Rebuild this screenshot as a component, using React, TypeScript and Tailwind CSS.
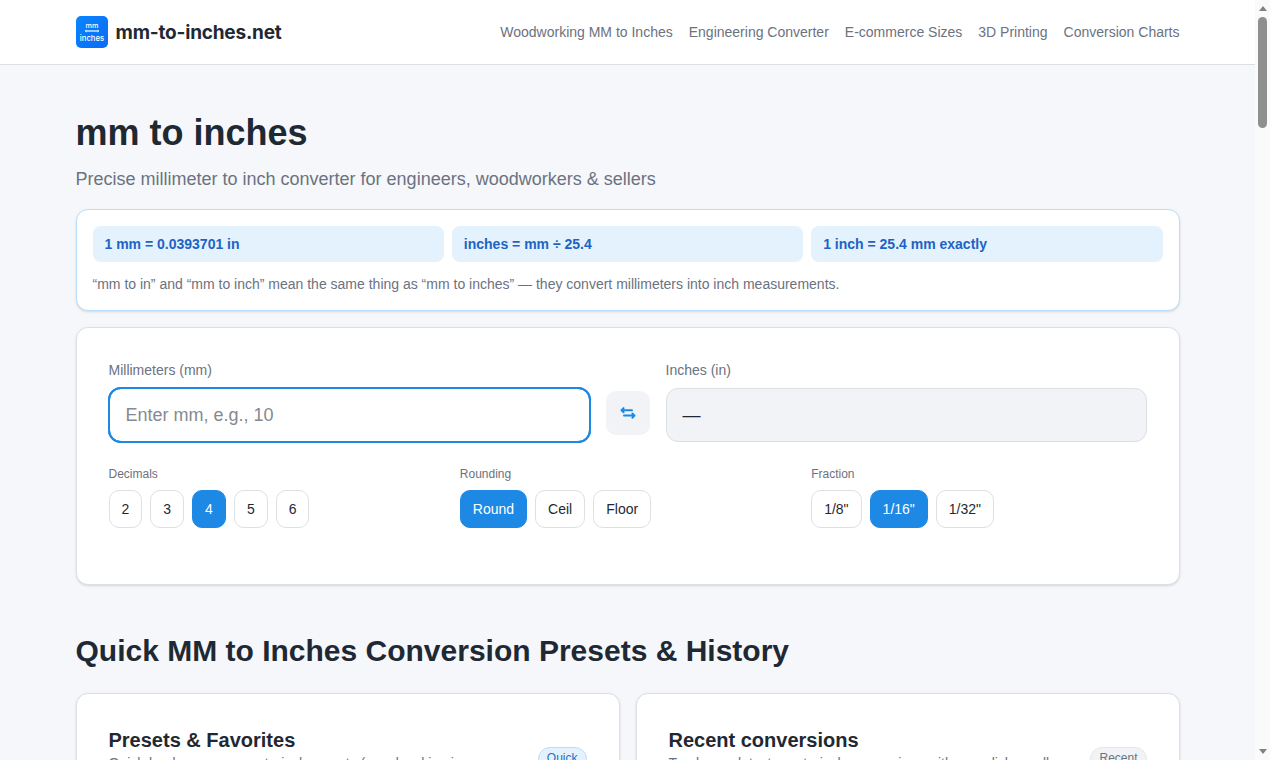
const sans = "font-['Liberation_Sans',Arial,sans-serif]";
const nav = ["Woodworking MM to Inches", "Engineering Converter", "E-commerce Sizes", "3D Printing", "Conversion Charts"];
const facts = ["1 mm = 0.0393701 in", "inches = mm ÷ 25.4", "1 inch = 25.4 mm exactly"];

function Logo() {
  return (
    <svg width="32" height="32" viewBox="0 0 32 32" className="shrink-0">
      <defs>
        <linearGradient id="logo-bg" x1="0" y1="0" x2="1" y2="1">
          <stop offset="0" stopColor="#0a84ff" />
          <stop offset="1" stopColor="#0a6cf5" />
        </linearGradient>
      </defs>
      <rect width="32" height="32" rx="5" fill="url(#logo-bg)" />
      <text x="16" y="11.5" textAnchor="middle" fontSize="7.2" fontWeight="500" fill="#fff" fontFamily="Inter, sans-serif">mm</text>
      <path d="M9.5 15h13" stroke="#fff" strokeWidth="1.2" />
      <path d="M10.5 14l-1.5 1 1.5 1M21.5 14l1.5 1-1.5 1" stroke="#fff" strokeWidth="0.7" fill="none" />
      <text x="16" y="25" textAnchor="middle" fontSize="7.7" fontWeight="500" fill="#fff" fontFamily="Inter, sans-serif">inches</text>
    </svg>
  );
}

function SwapIcon() {
  return (
    <svg width="16" height="16" viewBox="0 0 16 16" fill="none" stroke="#1e88e5" strokeWidth="2" strokeLinecap="round" strokeLinejoin="round">
      <path d="M1.5 5.2h10.5M3.6 3.1 1.5 5.2l2.1 2.1" />
      <path d="M14.5 10.6H4M12.4 8.5l2.1 2.1-2.1 2.1" />
    </svg>
  );
}

function Pills({ label, items, active }: { label: string; items: string[]; active: string }) {
  return (
    <div>
      <div className="text-xs leading-[14px] text-[#6b7280] mb-[9px]">{label}</div>
      <div className="flex gap-2">
        {items.map((item) => (
          <button
            key={item}
            className={
              item === active
                ? "h-[38px] px-3 rounded-[10px] border border-[#1e88e5] bg-[#1e88e5] text-white text-sm"
                : "h-[38px] px-3 rounded-[10px] border border-[#dcdfe4] bg-white text-[#1f2933] text-sm"
            }
          >
            {item}
          </button>
        ))}
      </div>
    </div>
  );
}

function Card({ title, text, badge, quick }: { title: string; text: string; badge: string; quick?: boolean }) {
  return (
    <section className="bg-white border border-[#dcdfe4] rounded-xl p-8 h-[400px] shadow-sm">
      <div className="flex items-start justify-between gap-4">
        <div>
          <h3 className="text-xl leading-7 font-bold">{title}</h3>
          <p className="-mt-px text-sm text-[#6b7280] leading-5">{text}</p>
        </div>
        <span
          className={
            quick
              ? "mt-[21px] px-2 h-6 rounded-full border border-[#bbdefb] bg-[#e3f2fd] text-xs leading-5 text-[#1e6fc4]"
              : "mt-[21px] px-2 h-6 rounded-full border border-[#e5e7eb] bg-[#f1f3f6] text-xs leading-5 text-[#6b7280]"
          }
        >
          {badge}
        </span>
      </div>
    </section>
  );
}

export default function App() {
  return (
    <div className={`h-screen flex overflow-hidden bg-[#f5f7fb] text-[#1f2933] ${sans}`}>
      <div className="flex-1 min-w-0">
        <header className="bg-white border-b border-[#dcdfe4] h-[65px]">
          <div className="w-[1104px] mx-auto h-full flex items-center justify-between">
            <div className="flex items-center gap-2">
              <Logo />
              <span className="mt-0.5 font-['Inter',sans-serif] text-[19px] tracking-[-0.2px] font-bold text-[#1f2933]">mm-to-inches.net</span>
            </div>
            <nav className="flex gap-4 text-sm text-[#6b7280]">
              {nav.map((n) => (
                <a key={n}>{n}</a>
              ))}
            </nav>
          </div>
        </header>

        <main className="w-[1104px] mx-auto pt-12">
          <h1 className="text-[36px] leading-10 font-bold">mm to inches</h1>
          <p className="mt-[15px] text-lg leading-[22px] text-[#6b7280]">
            Precise millimeter to inch converter for engineers, woodworkers &amp; sellers
          </p>

          <section className="mt-[19px] bg-white border border-[#bbdefb] rounded-xl p-4 shadow-sm">
            <div className="grid grid-cols-3 gap-2">
              {facts.map((f) => (
                <div key={f} className="h-9 flex items-center px-3 rounded-lg bg-[#e3f2fd] text-[#1e63c4] text-sm font-bold">
                  {f}
                </div>
              ))}
            </div>
            <p className="mt-3 text-sm leading-[20px] text-[#6b7280]">
              “mm to in” and “mm to inch” mean the same thing as “mm to inches” — they convert millimeters into inch measurements.
            </p>
          </section>

          <section className="mt-4 bg-white border border-[#dcdfe4] rounded-xl p-8 h-[258px] shadow-sm">
            <div className="flex items-end gap-4">
              <div className="flex-1">
                <label className="block text-sm leading-[20px] text-[#6b7280] mb-2">Millimeters (mm)</label>
                <input
                  placeholder="Enter mm, e.g., 10"
                  className="w-full h-[54px] rounded-xl border border-[#1e88e5] outline-2 outline-[#1e88e5] -outline-offset-1 ring-1 ring-[#1e88e5] px-4 text-lg bg-white placeholder:text-[#858a91]"
                />
              </div>
              <button className="w-11 h-11 mb-[7px] rounded-[10px] bg-[#f1f3f6] flex items-center justify-center">
                <SwapIcon />
              </button>
              <div className="flex-1">
                <label className="block text-sm leading-[20px] text-[#6b7280] mb-2">Inches (in)</label>
                <div className="h-[54px] rounded-xl border border-[#dcdfe4] bg-[#f1f3f6] px-4 flex items-center text-lg">—</div>
              </div>
            </div>
            <div className="grid grid-cols-3 gap-4 mt-[25px]">
              <Pills label="Decimals" items={["2", "3", "4", "5", "6"]} active="4" />
              <Pills label="Rounding" items={["Round", "Ceil", "Floor"]} active="Round" />
              <Pills label="Fraction" items={['1/8"', '1/16"', '1/32"']} active='1/16"' />
            </div>
          </section>

          <h2 className="mt-12 text-[30px] leading-9 font-bold">Quick MM to Inches Conversion Presets &amp; History</h2>

          <div className="mt-6 grid grid-cols-2 gap-4">
            <Card title="Presets & Favorites" text="Quick-load common mm-to-inch presets (woodworking in" badge="Quick" quick />
            <Card title="Recent conversions" text="Track your latest mm-to-inch conversions with one-click recall" badge="Recent" />
          </div>
        </main>
      </div>

      {/* page scrollbar */}
      <div className="w-[15px] shrink-0 bg-[#fafafa] flex flex-col items-center">
        <div className="h-[17px] flex items-center justify-center">
          <div className="w-0 h-0 border-x-[4.5px] border-x-transparent border-b-[5px] border-b-[#808080]" />
        </div>
        <div className="w-[9px] h-[111px] rounded-full bg-[#8f8f8f]" />
        <div className="flex-1" />
        <div className="h-[17px] flex items-center justify-center">
          <div className="w-0 h-0 border-x-[4.5px] border-x-transparent border-t-[5px] border-t-[#808080]" />
        </div>
      </div>
    </div>
  );
}
